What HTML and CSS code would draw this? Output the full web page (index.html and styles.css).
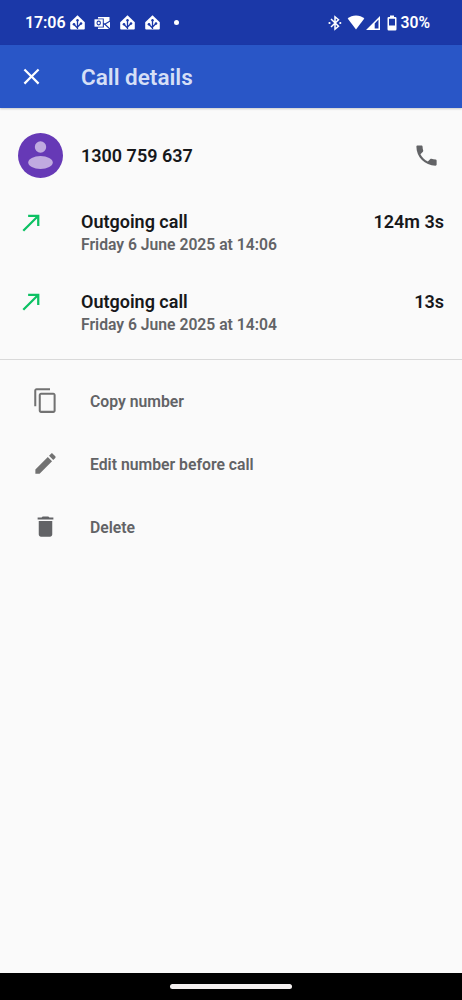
FILE: index.html
```html
<!DOCTYPE html>
<html lang="en">
<head>
<meta charset="utf-8">
<title>Call details</title>
<link rel="stylesheet" href="styles.css">
</head>
<body>
<svg class="defs" width="0" height="0">
  <symbol id="home" viewBox="0 0 15 15">
    <path fill="#fff" d="M7.5.2 14.8 7.300V13.500Q14.800 14.500 13.800 14.500H1.200Q.2 14.500.2 13.500V7.300Z"/>
    <path fill="none" stroke="#1b38a8" stroke-width="1.300" d="M7.500 5v9M7.500 13 4 9.500M7.500 12 11 8.500"/>
    <g fill="#1b38a8"><circle cx="7.500" cy="5.200" r="1.200"/><circle cx="4" cy="9.200" r="1.300"/><circle cx="11" cy="8.500" r="1.300"/></g>
  </symbol>
  <symbol id="arrow" viewBox="0 0 24 24"><path d="M9 5v2h6.590L4 18.590 5.410 20 17 8.410V15h2V5z"/></symbol>
</svg>
<div class="screen">
  <header class="status">
    <span class="time">17:06</span>
    <svg class="home"><use href="#home"/></svg>
    <svg class="outlook" viewBox="0 0 17 14">
      <path fill="#fff" d="M4 1H15.500V4.800L10.800 7.400 9.800 6.800V2.500H4ZM16 5.800v6.400L11.800 8.300ZM4 13v-1.500H9.900V8.600L10.800 9 15 13Z"/>
      <path fill="#fff" d="M.5 3.300H8.800V10.700H.5Z"/>
      <ellipse cx="4.700" cy="7" rx="1.700" ry="1.900" fill="none" stroke="#1b38a8" stroke-width="1.100"/>
    </svg>
    <svg class="home third"><use href="#home"/></svg>
    <svg class="home fourth"><use href="#home"/></svg>
    <i class="dot"></i>
    <div class="system">
      <svg class="bt" viewBox="0 0 14 16"><path fill="none" stroke="#fff" stroke-width="1.500" d="m3 4 7.500 7.200L7 14.200V1.800l3.500 3L3 12"/><circle cx="1.500" cy="8" r="1.100" fill="#fff"/><circle cx="12.300" cy="8" r="1.100" fill="#fff"/></svg>
      <svg class="wifi" viewBox="0 0 18 15"><path fill="#fff" d="M9 .5c3.300 0 6 1.200 8.300 3L9 14.500.7 3.500C3 1.700 5.700.5 9 .5Z"/></svg>
      <svg class="signal" viewBox="0 0 14 14"><path fill="#fff" fill-rule="evenodd" d="M14 0v14H0ZM12.500 3.600 8.700 7.400V12.500h3.800Z"/></svg>
      <svg class="battery" viewBox="0 0 10 16"><path fill="#fff" fill-rule="evenodd" d="M3 .5h4V2h1.300Q9.500 2 9.500 3.200V14.300Q9.500 15.500 8.300 15.500H1.700Q.5 15.500.5 14.300V3.200Q.5 2 1.700 2H3ZM2 3.700V10.500H8V3.700Z"/></svg>
      <span>30%</span>
    </div>
  </header>
  <div class="toolbar">
    <svg class="icon" viewBox="0 0 24 24"><path d="M19 6.410 17.590 5 12 10.590 6.410 5 5 6.410 10.590 12 5 17.590 6.410 19 12 13.410 17.590 19 19 17.590 13.410 12z"/></svg>
    <h1>Call details</h1>
  </div>
  <main>
    <section class="contact">
      <svg class="avatar" viewBox="0 0 45 45"><circle cx="22.500" cy="22.500" r="22.500" fill="#6639b6"/><g fill="#c0aae0"><circle cx="22.500" cy="14" r="5.700"/><ellipse cx="22.500" cy="29.500" rx="12.300" ry="6.500"/></g></svg>
      <span class="number">1300 759 637</span>
      <svg class="icon" viewBox="0 0 24 24"><path d="M6.620 10.790c1.440 2.830 3.760 5.140 6.590 6.590l2.200-2.200c.27-.27.67-.36 1.020-.24 1.120.37 2.330.57 3.570.57.55 0 1 .45 1 1V20c0 .55-.45 1-1 1-9.390 0-17-7.610-17-17 0-.55.45-1 1-1h3.500c.55 0 1 .45 1 1 0 1.250.2 2.450.57 3.570.11.35.03.74-.25 1.020z"/></svg>
    </section>
    <section class="call">
      <svg class="icon arrow"><use href="#arrow"/></svg>
      <div class="info"><div class="kind">Outgoing call</div><div class="date">Friday 6 June 2025 at 14:06</div></div>
      <span class="duration">124m 3s</span>
    </section>
    <section class="call second">
      <svg class="icon arrow"><use href="#arrow"/></svg>
      <div class="info"><div class="kind">Outgoing call</div><div class="date">Friday 6 June 2025 at 14:04</div></div>
      <span class="duration">13s</span>
    </section>
    <ul class="actions">
      <li><svg class="icon copy" viewBox="0 0 24 24"><path d="M16 1H4c-1.100 0-2 .9-2 2v14h1.800V2.800H16V1zm3 4H8c-1.100 0-2 .9-2 2v14c0 1.100.9 2 2 2h11c1.100 0 2-.9 2-2V7c0-1.100-.9-2-2-2zm.2 16.200H7.800V6.800h11.400v14.400z"/></svg><span>Copy number</span></li>
      <li><svg class="icon edit" viewBox="0 0 24 24"><path d="M3 17.250V21h3.750L17.810 9.940l-3.750-3.750L3 17.250zM20.710 7.040c.39-.39.39-1.020 0-1.410l-2.340-2.340c-.39-.39-1.020-.39-1.410 0l-1.830 1.830 3.750 3.750 1.830-1.830z"/></svg><span>Edit number before call</span></li>
      <li><svg class="icon" viewBox="0 0 24 24"><path d="M6 19c0 1.100.9 2 2 2h8c1.100 0 2-.9 2-2V7H6v12zM19 4h-3.500l-1-1h-5l-1 1H5v1.800h14V4z"/></svg><span>Delete</span></li>
    </ul>
  </main>
  <footer><i></i></footer>
</div>
</body>
</html>
```
FILE: styles.css
```css
* { box-sizing: border-box; }
body { margin: 0; font-family: Roboto, "Liberation Sans", sans-serif; font-weight: 600; color: #17181a; }
.defs { position: absolute; }
svg { display: block; flex: none; }
.screen { width: 462px; height: 1000px; display: flex; flex-direction: column; background: #fafafa; overflow: hidden; }
.status { height: 45px; flex: none; display: flex; align-items: center; padding: 0 32px 0 25px; background: #1b38a8; color: #fff; font-size: 16px; }
.time { width: 45px; letter-spacing: -0.1px; }
.home { width: 15px; height: 15px; }
.outlook { width: 17px; height: 14px; margin-left: 9px; }
.third { margin-left: 9px; }
.fourth { margin-left: 10px; }
.dot { width: 5px; height: 5px; margin-left: 14px; border-radius: 50%; background: #fff; }
.system { display: flex; align-items: center; margin-left: auto; }
.bt { width: 14px; height: 16px; }
.wifi { width: 18px; height: 15px; margin-left: 5px; }
.signal { width: 14px; height: 14px; margin-left: 1px; }
.battery { width: 10px; height: 16px; margin-left: 7px; }
.system span { margin-left: 4px; font-size: 15.7px; }
.icon { width: 27px; height: 27px; fill: #626366; }
.toolbar { height: 63px; flex: none; display: flex; align-items: center; padding: 0 18px; background: #2956c7; box-shadow: 0 1px 2px #0003; }
.toolbar .icon { fill: #fff; }
.toolbar h1 { margin: 0 0 0 36px; font-size: 22.5px; line-height: 28px; font-weight: 600; color: #d5dff6; }
main { flex: 1; }
.contact { height: 95px; display: flex; align-items: center; padding: 0 22.5px 0 18px; }
.avatar { width: 45px; height: 45px; }
.number { margin-left: 18px; flex: 1; font-size: 18px; }
.call { height: 79px; display: flex; align-items: flex-start; padding: 6px 18px 0; }
.second { height: 80px; padding-top: 7px; }
.second .arrow { margin-top: -1px; }
.arrow { fill: #0cc163; }
.info { margin-left: 36px; flex: 1; }
.kind, .duration { font-size: 18px; line-height: 26px; }
.date { font-size: 15.7px; line-height: 20px; color: #626366; }
.actions { list-style: none; margin: -3px 0 0; padding: 9px 0 0; border-top: 1px solid #d9d9d9; }
.actions li { height: 63px; display: flex; align-items: center; padding-left: 31.5px; font-size: 15.75px; color: #626366; }
.actions span { margin-left: 31.5px; padding-top: 2px; }
.actions .copy, .actions .edit { fill: #727272; }
footer { height: 27px; flex: none; display: flex; justify-content: center; align-items: center; background: #000; }
footer i { width: 122px; height: 5px; border-radius: 3px; background: #f4f0f0; }
```
